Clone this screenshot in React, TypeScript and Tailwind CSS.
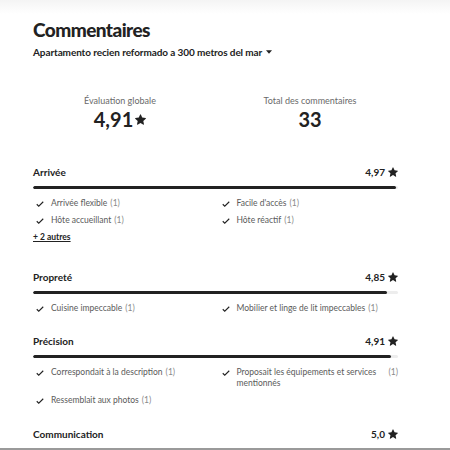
import React from "react";

const Star = ({ className = "" }: { className?: string }) => (
  <svg viewBox="0 0 32 32" className={className} fill="currentColor" aria-hidden>
    <path d="M15.1 1.58l-4.13 8.88-9.86 1.27a1 1 0 0 0-.54 1.74l7.3 6.57-1.97 9.850a1 1 0 0 0 1.48 1.06l8.62-5 8.63 5a1 1 0 0 0 1.48-1.06l-1.97-9.85 7.3-6.57a1 1 0 0 0-.55-1.73l-9.86-1.28-4.12-8.88a1 1 0 0 0-1.82 0z" />
  </svg>
);

const Check = () => (
  <svg viewBox="0 0 16 16" className="w-[8px] h-[8px] shrink-0 text-[#222]" fill="none" stroke="currentColor" strokeWidth="2.2" aria-hidden>
    <path d="M1.5 8.5l4 4 9-9" />
  </svg>
);

type Item = { label: string; count: number };
type Section = { title: string; rating: string; value: number; items: Item[]; more?: string };

const sections: Section[] = [
  {
    title: "Arrivée",
    rating: "4,97",
    value: 4.97,
    items: [
      { label: "Arrivée flexible", count: 1 },
      { label: "Facile d'accès", count: 1 },
      { label: "Hôte accueillant", count: 1 },
      { label: "Hôte réactif", count: 1 },
    ],
    more: "+ 2 autres",
  },
  {
    title: "Propreté",
    rating: "4,85",
    value: 4.85,
    items: [
      { label: "Cuisine impeccable", count: 1 },
      { label: "Mobilier et linge de lit impeccables", count: 1 },
    ],
  },
  {
    title: "Précision",
    rating: "4,91",
    value: 4.91,
    items: [
      { label: "Correspondait à la description", count: 1 },
      { label: "Proposait les équipements et services mentionnés", count: 1 },
      { label: "Ressemblait aux photos", count: 1 },
    ],
  },
  {
    title: "Communication",
    rating: "5,0",
    value: 5,
    items: [],
  },
];

const gaps = ["", "mt-[21px]", "mt-[14px]", "mt-[15px]"];

export default function App() {
  return (
    <div
      className="relative w-[450px] h-[450px] overflow-hidden bg-white text-[#222]"
      style={{ fontFamily: "Lato, 'Noto Sans', sans-serif" }}
    >
      <div className="absolute top-0 left-0 right-0 h-[14px] bg-gradient-to-b from-[#f4f4f4] to-white" />
      <div className="relative pl-[33px] w-[398px] pt-[17px]">
        <h1 className="text-[19px] leading-[26px] font-black tracking-[-0.55px]">Commentaires</h1>
        <div className="flex items-center mt-[2px] h-[14px] leading-[14px]">
          <span className="text-[10px] font-bold tracking-[-0.1px]">
            Apartamento recien reformado a 300 metros del mar
          </span>
          <svg viewBox="0 0 10 6" className="w-[6px] h-[4px] ml-[4px]" fill="#222" aria-hidden>
            <path d="M0 0h10L5 6z" />
          </svg>
        </div>

        <div className="grid grid-cols-2 -ml-[8px] w-[380px] mt-[36px]">
          <div className="flex flex-col items-center">
            <span className="text-[9px] leading-[12px] text-[#6a6a6a]">Évaluation globale</span>
            <span className="flex items-center text-[20px] leading-[22px] font-bold mt-[1px]">
              4,91
              <Star className="w-[11px] h-[11px] ml-[2px]" />
            </span>
          </div>
          <div className="flex flex-col items-center">
            <span className="text-[9px] leading-[12px] text-[#6a6a6a]">Total des commentaires</span>
            <span className="text-[20px] leading-[22px] font-bold mt-[1px]">33</span>
          </div>
        </div>

        <div className="mt-[32px] flex flex-col">
          {sections.map((s, i) => (
            <div key={s.title} className={gaps[i]}>
              <div className="flex items-center justify-between h-[20px] leading-[20px]">
                <span className="text-[10px] font-bold">{s.title}</span>
                <span className="flex items-center text-[10px] font-bold">
                  {s.rating}
                  <Star className="w-[10px] h-[10px] ml-[3px]" />
                </span>
              </div>
              {s.items.length > 0 && (
                <>
                  <div className="mt-[4px] h-[3px] bg-[#ededed] rounded-full overflow-hidden">
                    <div className="h-full bg-[#222] rounded-full" style={{ width: `${(s.value / 5) * 100}%` }} />
                  </div>
                  <div className="grid grid-cols-2 gap-x-[6px] mt-[6px]">
                    {s.items.map((it) => (
                      <div key={it.label} className="flex items-start py-[3px] pl-[3px] leading-[11px]">
                        <span className="h-[11px] flex items-center">
                          <Check />
                        </span>
                        <span className="ml-[7px] text-[8.5px] leading-[11px] text-[#5a5a5a]">{it.label}</span>
                        <span className="ml-[3px] text-[8.5px] leading-[11px] text-[#8a8a8a] shrink-0">({it.count})</span>
                      </div>
                    ))}
                  </div>
                  {s.more && (
                    <div className="py-[3px] text-[8.5px] leading-[11px]">
                      <span className="font-bold underline">{s.more}</span>
                    </div>
                  )}
                </>
              )}
            </div>
          ))}
        </div>
      </div>
      <div className="absolute left-0 right-0 bottom-0 h-[2px] bg-[#9a9a9a]" />
    </div>
  );
}
